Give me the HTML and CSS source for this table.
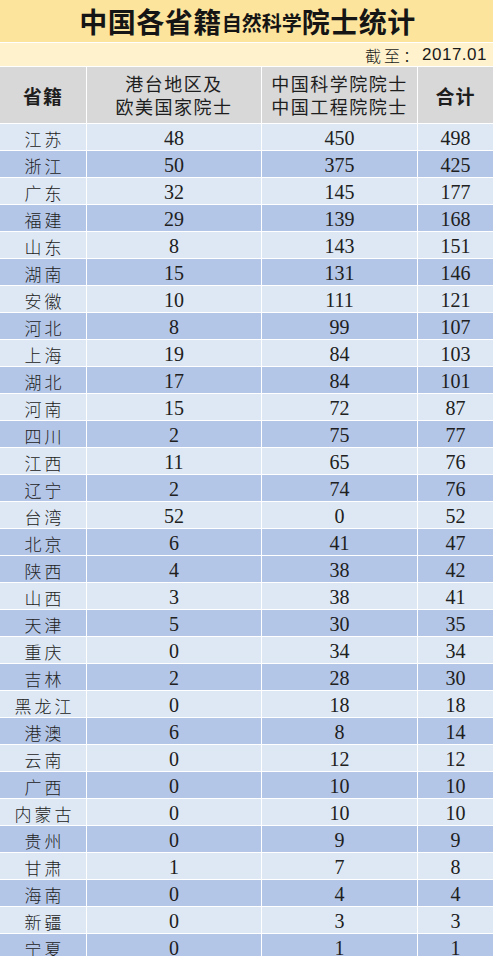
FILE: index.html
```html
<!DOCTYPE html>
<html lang="zh-CN">
<head>
<meta charset="utf-8">
<title>中国各省籍自然科学院士统计</title>
<link rel="stylesheet" href="styles.css">
</head>
<body>
<div class="sheet">
  <div class="title"><span class="big">中国各省籍</span><span class="small">自然科学</span><span class="big">院士统计</span></div>
  <div class="sub"><span class="sub-label">截至：</span><span class="sub-date">2017.01</span></div>
  <div class="grid">
    <div class="hd hd-bold">省籍</div>
    <div class="hd">港台地区及<br>欧美国家院士</div>
    <div class="hd">中国科学院院士<br>中国工程院院士</div>
    <div class="hd hd-bold">合计</div>

    <div class="c name l">江苏</div><div class="c num l">48</div><div class="c num l">450</div><div class="c num l">498</div>
    <div class="c name d">浙江</div><div class="c num d">50</div><div class="c num d">375</div><div class="c num d">425</div>
    <div class="c name l">广东</div><div class="c num l">32</div><div class="c num l">145</div><div class="c num l">177</div>
    <div class="c name d">福建</div><div class="c num d">29</div><div class="c num d">139</div><div class="c num d">168</div>
    <div class="c name l">山东</div><div class="c num l">8</div><div class="c num l">143</div><div class="c num l">151</div>
    <div class="c name d">湖南</div><div class="c num d">15</div><div class="c num d">131</div><div class="c num d">146</div>
    <div class="c name l">安徽</div><div class="c num l">10</div><div class="c num l">111</div><div class="c num l">121</div>
    <div class="c name d">河北</div><div class="c num d">8</div><div class="c num d">99</div><div class="c num d">107</div>
    <div class="c name l">上海</div><div class="c num l">19</div><div class="c num l">84</div><div class="c num l">103</div>
    <div class="c name d">湖北</div><div class="c num d">17</div><div class="c num d">84</div><div class="c num d">101</div>
    <div class="c name l">河南</div><div class="c num l">15</div><div class="c num l">72</div><div class="c num l">87</div>
    <div class="c name d">四川</div><div class="c num d">2</div><div class="c num d">75</div><div class="c num d">77</div>
    <div class="c name l">江西</div><div class="c num l">11</div><div class="c num l">65</div><div class="c num l">76</div>
    <div class="c name d">辽宁</div><div class="c num d">2</div><div class="c num d">74</div><div class="c num d">76</div>
    <div class="c name l">台湾</div><div class="c num l">52</div><div class="c num l">0</div><div class="c num l">52</div>
    <div class="c name d">北京</div><div class="c num d">6</div><div class="c num d">41</div><div class="c num d">47</div>
    <div class="c name d">陕西</div><div class="c num d">4</div><div class="c num d">38</div><div class="c num d">42</div>
    <div class="c name l">山西</div><div class="c num l">3</div><div class="c num l">38</div><div class="c num l">41</div>
    <div class="c name d">天津</div><div class="c num d">5</div><div class="c num d">30</div><div class="c num d">35</div>
    <div class="c name l">重庆</div><div class="c num l">0</div><div class="c num l">34</div><div class="c num l">34</div>
    <div class="c name d">吉林</div><div class="c num d">2</div><div class="c num d">28</div><div class="c num d">30</div>
    <div class="c name l">黑龙江</div><div class="c num l">0</div><div class="c num l">18</div><div class="c num l">18</div>
    <div class="c name d">港澳</div><div class="c num d">6</div><div class="c num d">8</div><div class="c num d">14</div>
    <div class="c name l">云南</div><div class="c num l">0</div><div class="c num l">12</div><div class="c num l">12</div>
    <div class="c name d">广西</div><div class="c num d">0</div><div class="c num d">10</div><div class="c num d">10</div>
    <div class="c name l">内蒙古</div><div class="c num l">0</div><div class="c num l">10</div><div class="c num l">10</div>
    <div class="c name d">贵州</div><div class="c num d">0</div><div class="c num d">9</div><div class="c num d">9</div>
    <div class="c name l">甘肃</div><div class="c num l">1</div><div class="c num l">7</div><div class="c num l">8</div>
    <div class="c name d">海南</div><div class="c num d">0</div><div class="c num d">4</div><div class="c num d">4</div>
    <div class="c name l">新疆</div><div class="c num l">0</div><div class="c num l">3</div><div class="c num l">3</div>
    <div class="c name d">宁夏</div><div class="c num d">0</div><div class="c num d">1</div><div class="c num d">1</div>
  </div>
</div>
</body>
</html>
```

FILE: styles.css
```css
html, body {
  margin: 0;
  padding: 0;
  background: #ffffff;
}

.sheet {
  width: 493px;
  display: flex;
  flex-direction: column;
  gap: 1px;
  background: #ffffff;
  font-family: "Noto Sans CJK SC", sans-serif;
  color: #1c1c1c;
}

.title {
  height: 42px;
  background: #fde49c;
  display: flex;
  align-items: center;
  justify-content: center;
  font-weight: 700;
  line-height: 1;
  color: #151515;
  padding-left: 2px;
}

.title .big {
  font-size: 28px;
  letter-spacing: 0.5px;
}

.title .small {
  font-size: 20px;
  padding-top: 4px;
}

.sub {
  height: 23px;
  background: #fff2cd;
  display: flex;
  align-items: center;
  justify-content: flex-end;
  padding-right: 6px;
  font-size: 16px;
  line-height: 1;
  color: #1a1a1a;
}

.sub-label {
  letter-spacing: 3px;
  font-weight: 300;
}

.sub-date {
  font-family: "Liberation Sans", Arial, sans-serif;
  font-size: 17px;
  letter-spacing: 0.5px;
}

.grid {
  display: grid;
  grid-template-columns: 86px 174px 155px 75px;
  grid-auto-rows: 26px;
  gap: 1px;
  background: #ffffff;
}

.hd {
  grid-row: auto;
  height: 56px;
  background: #d8d8d8;
  display: flex;
  align-items: center;
  justify-content: center;
  text-align: center;
  font-size: 18px;
  line-height: 23px;
  letter-spacing: 1.5px;
  color: #1e1e1e;
}

.grid > .hd {
  align-self: start;
}

.grid {
  grid-template-rows: 56px;
}

.hd-bold {
  font-weight: 700;
  font-size: 19px;
  letter-spacing: 1px;
}

.c {
  display: flex;
  align-items: center;
  justify-content: center;
  padding-top: 2px;
  box-sizing: border-box;
}

.l {
  background: #dde8f4;
}

.d {
  background: #b4c6e7;
}

.name {
  font-size: 17px;
  font-weight: 300;
  letter-spacing: 3px;
  padding-left: 3px;
  color: #222222;
}

.num {
  font-family: "Liberation Serif", "Times New Roman", serif;
  font-size: 20px;
  color: #202020;
}
```
